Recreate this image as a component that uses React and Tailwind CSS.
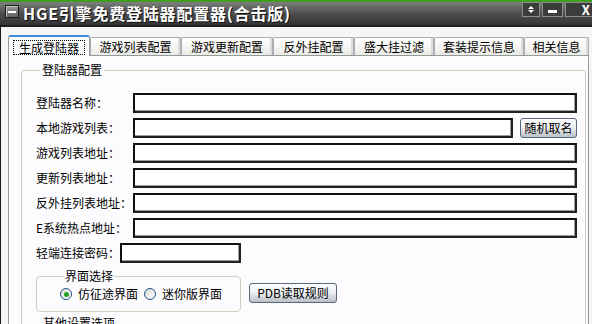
const tabs = [
  { label: "生成登陆器", w: "w-[82px]", active: true },
  { label: "游戏列表配置", w: "w-[91px]" },
  { label: "游戏更新配置", w: "w-[92px]" },
  { label: "反外挂配置", w: "w-[81px]" },
  { label: "盛大挂过滤", w: "w-[80px]" },
  { label: "套装提示信息", w: "w-[90px]" },
  { label: "相关信息", w: "w-[65px]" },
];

const rows = [
  { label: "登陆器名称：" },
  { label: "本地游戏列表：", button: "随机取名" },
  { label: "游戏列表地址：" },
  { label: "更新列表地址：" },
  { label: "反外挂列表地址：" },
  { label: "E系统热点地址：" },
  { label: "轻端连接密码：", short: true },
];

const Field = ({ className = "" }) => (
  <div
    className={`h-[20px] border-2 border-t-[#111] border-l-[#111] border-r-[#222] border-b-[#222] bg-white shadow-[inset_-1px_-1px_0_#9a9a9a] ${className}`}
  />
);

const XpButton = ({ children, className = "" }) => (
  <div
    className={`flex h-[20px] items-center justify-center rounded-[3px] border border-[#5b6a7a] bg-gradient-to-b from-[#fdfdfd] via-[#eceef0] to-[#b9c0c7] text-[12px] text-black ${className}`}
  >
    {children}
  </div>
);

const Radio = ({ checked }) => (
  <span className="flex h-[12px] w-[12px] items-center justify-center rounded-full border border-[#1c5180] bg-gradient-to-br from-[#dcdcd6] to-white">
    {checked && <span className="h-[5px] w-[5px] rounded-full bg-[#21a121]" />}
  </span>
);

export default function App() {
  return (
    <div
      className="h-[324px] w-[592px] overflow-hidden bg-[#f6f6f4] text-black"
      style={{ fontFamily: '"Noto Sans CJK SC", "Liberation Sans", sans-serif' }}
    >
      {/* title bar */}
      <div className="flex h-[27px] items-start border-t-2 border-t-[#3f9e1e] border-b-2 border-b-[#1e1e1e] bg-gradient-to-b from-[#7e7e7e] via-[#4e4e4e] to-[#343434]">
        <div className="ml-[5px] mt-[3px] flex h-[13px] w-[14px] items-center justify-center border border-[#1a1a1a] bg-gradient-to-b from-[#9a9a9a] to-[#5e5e5e] shadow-[inset_1px_1px_0_#c8c8c8]">
          <span className="h-[2px] w-[8px] bg-white" />
        </div>
        <div className="ml-[4px] mt-[1px] text-[16px] font-bold leading-[20px] tracking-[0.8px] text-white [text-shadow:1px_1px_0_#111]">
          HGE引擎免费登陆器配置器(合击版)
        </div>
        <div className="ml-auto flex h-[15px] gap-[2px]">
          <div className="flex w-[18px] flex-col items-center justify-center gap-[1px] border border-[#8c8c8c] bg-[#3c3c3c]">
            <span className="h-0 w-0 border-x-[3px] border-b-[3px] border-x-transparent border-b-white" />
            <span className="h-0 w-0 border-x-[3px] border-t-[3px] border-x-transparent border-t-white" />
          </div>
          <div className="flex w-[21px] items-center justify-center border border-[#8c8c8c] bg-[#3c3c3c]">
            <span className="mt-[3px] h-[3px] w-[9px] bg-white" />
          </div>
          <div className="flex w-[27px] items-center justify-end border border-r-0 border-[#8c8c8c] bg-[#3c3c3c] pr-[2px] text-[13px] font-bold leading-none text-white">
            X
          </div>
        </div>
      </div>

      {/* body */}
      <div className="flex h-[297px]">
        <div className="w-[3px] bg-[#1c1c1c]" />
        <div className="flex flex-1 flex-col pl-[7px] pr-[3px] pt-[8px]">
          {/* tabs */}
          <div className="relative z-10 flex h-[20px] items-end">
            {tabs.map((t) =>
              t.active ? (
                <div
                  key={t.label}
                  className={`${t.w} -mb-px flex h-[21px] items-center justify-center rounded-t-[3px] border border-b-0 border-[#919b9c] border-t-2 border-t-[#3a8ad8] bg-[#fcfcfe] px-[4px] pt-[1px]`}
                >
                  <span className="w-full border border-dotted border-black text-center text-[12px] leading-[13px]">
                    {t.label}
                  </span>
                </div>
              ) : (
                <div
                  key={t.label}
                  className={`${t.w} flex h-[18px] items-center justify-center rounded-t-[2px] border border-b-0 border-[#a9afb3] bg-gradient-to-b from-white to-[#ecebe6] text-[12px] leading-none shadow-[inset_-2px_0_0_#dcdcdc]`}
                >
                  {t.label}
                </div>
              )
            )}
          </div>

          {/* panel */}
          <div className="flex-1 border border-b-0 border-[#919b9c] bg-[#fcfcfe] pl-[12px] pr-[2px] pt-[7px]">
            <fieldset className="rounded-[3px] border border-[#d0d0bf] pb-[10px] pl-[14px] pr-[8px] pt-[16px]">
              <legend className="ml-[4px] px-[2px] text-[12px] leading-[14px]">登陆器配置</legend>
              <div className="flex flex-col gap-[5px]">
                {rows.map((r) => (
                  <div key={r.label} className="flex h-[20px] items-center">
                    <span className={`${r.short ? "w-[84px]" : "w-[97px]"} shrink-0 whitespace-nowrap text-[12px] leading-none`}>
                      {r.label}
                    </span>
                    {r.short ? (
                      <Field className="w-[121px]" />
                    ) : r.button ? (
                      <div className="flex flex-1 items-center gap-[7px]">
                        <Field className="flex-1" />
                        <XpButton className="w-[57px]">{r.button}</XpButton>
                      </div>
                    ) : (
                      <Field className="flex-1" />
                    )}
                  </div>
                ))}
              </div>

              <div className="mt-[6px] flex items-start gap-[8px]">
                <fieldset className="h-[43px] w-[205px] rounded-[4px] border border-[#d0d0bf] pl-[23px] pt-0">
                  <legend className="ml-[4px] px-[1px] text-[12px] leading-[14px]">界面选择</legend>
                  <div className="mt-[5px] flex items-center text-[12px] leading-none">
                    <Radio checked />
                    <span className="ml-[6px]">仿征途界面</span>
                    <span className="ml-[6px]">
                      <Radio />
                    </span>
                    <span className="ml-[6px]">迷你版界面</span>
                  </div>
                </fieldset>
                <XpButton className="mt-[14px] w-[88px]">PDB读取规则</XpButton>
              </div>

              <div className="ml-[7px] mt-[4px] text-[12px] leading-[14px]">其他设置选项</div>
            </fieldset>
          </div>
        </div>
      </div>
    </div>
  );
}
